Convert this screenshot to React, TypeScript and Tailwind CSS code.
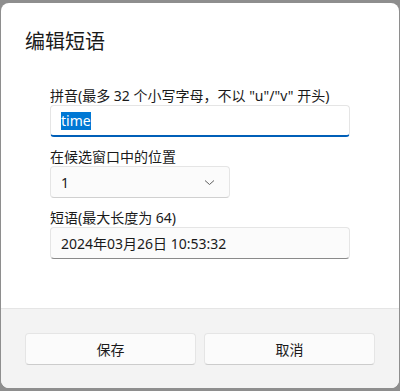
export default function App() {
    const font = { fontFamily: '"Noto Sans", "Noto Sans CJK SC", sans-serif' }
    return (
        <div className="w-[400px] h-[391px] bg-[#8e8e8e] pt-[3px] px-px" style={font}>
            <div className="w-[398px] h-[385px] bg-white rounded-lg overflow-hidden flex flex-col text-[#1a1a1a]">
                {/* Body */}
                <div className="flex-1 pt-[25px] px-6">
                    <h1 className="text-[20px] leading-[28px] font-normal">编辑短语</h1>
                    <div className="mt-[30px] ml-[25px] w-[300px] flex flex-col gap-[10px]">
                        <div className="flex flex-col">
                            <label className="text-[14px] leading-[19px]">拼音(最多 32 个小写字母，不以 "u"/"v" 开头)</label>
                            <div className="h-8 bg-white rounded border border-[#e5e5e5] border-b-2 border-b-[#005fb8] px-[10px] flex items-center text-[14px]">
                                <span className="bg-[#0078d4] text-white leading-[18px]">time</span>
                            </div>
                        </div>
                        <div className="flex flex-col">
                            <label className="text-[14px] leading-[19px]">在候选窗口中的位置</label>
                            <div className="h-8 w-[180px] bg-[#fbfbfb] rounded border border-[#e5e5e5] border-b-[#d0d0d0] pl-[10px] pr-[14px] flex items-center justify-between text-[14px]">
                                <span>1</span>
                                <svg width="11" height="7" viewBox="0 0 11 7" fill="none">
                                    <path d="M1 1.5l4.5 4 4.5-4" stroke="#5f5f5f" strokeWidth="1" />
                                </svg>
                            </div>
                        </div>
                        <div className="flex flex-col">
                            <label className="text-[14px] leading-[19px]">短语(最大长度为 64)</label>
                            <div className="h-8 bg-[#fbfbfb] rounded border border-[#e5e5e5] border-b-[#8a8a8a] px-[10px] flex items-center text-[14px]">
                                2024年03月26日 10:53:32
                            </div>
                        </div>
                    </div>
                </div>
                {/* Footer */}
                <div className="h-[80px] bg-[#f3f3f3] border-t border-[#e5e5e5] px-6 pt-6 grid grid-cols-2 gap-2">
                    <button className="h-8 bg-[#fbfbfb] rounded border border-[#e5e5e5] border-b-[#cccccc] text-[14px]">保存</button>
                    <button className="h-8 bg-[#fbfbfb] rounded border border-[#e5e5e5] border-b-[#cccccc] text-[14px]">取消</button>
                </div>
            </div>
        </div>
    )
}
